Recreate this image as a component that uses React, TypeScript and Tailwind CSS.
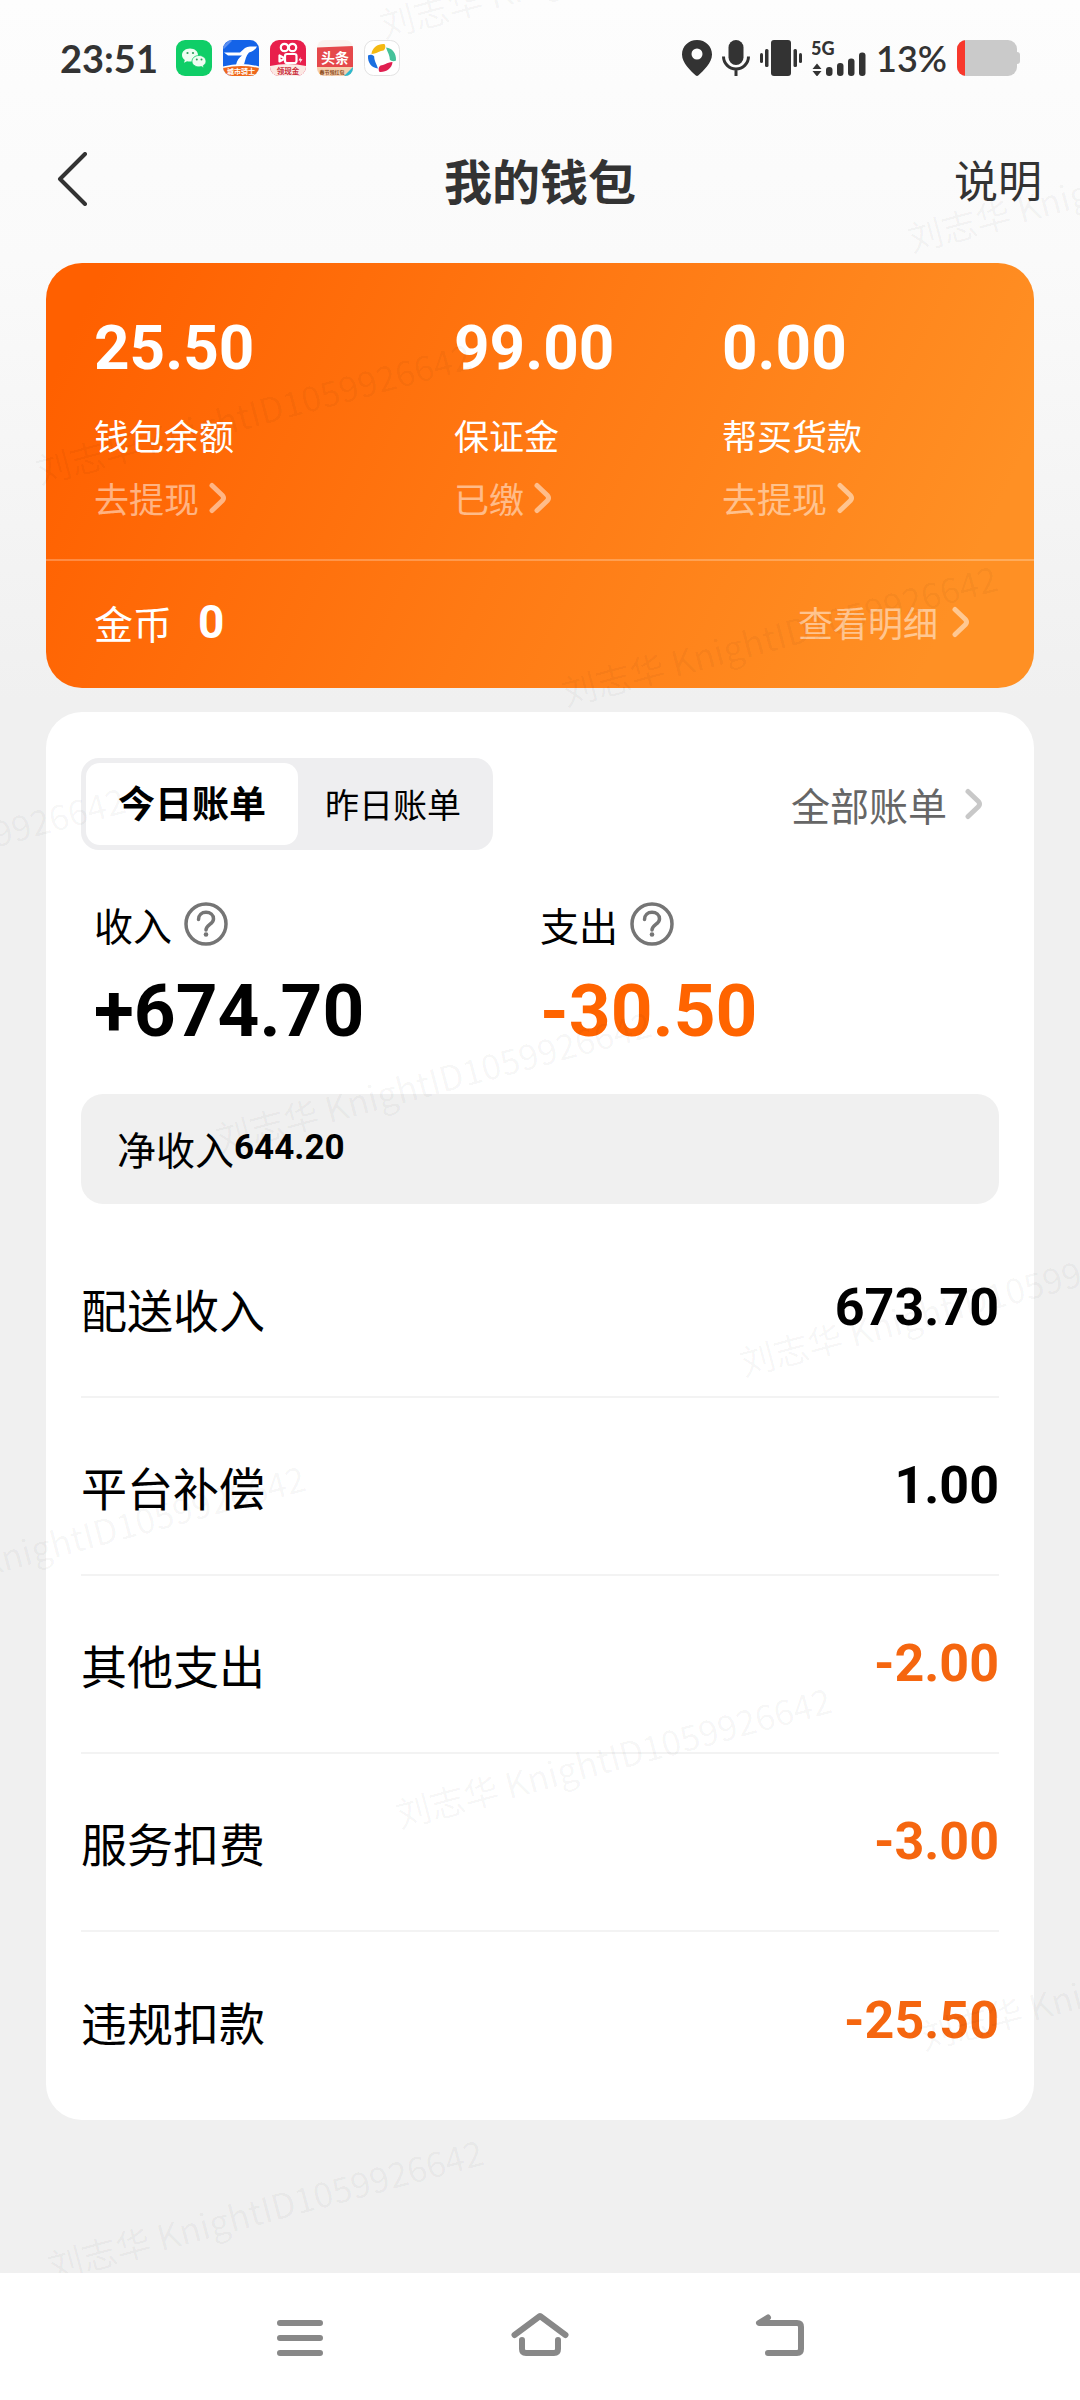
import { useState } from 'react'
import clsx from 'clsx'

const BALANCES = [
  { amount: '25.50', label: '钱包余额', action: '去提现' },
  { amount: '99.00', label: '保证金', action: '已缴' },
  { amount: '0.00', label: '帮买货款', action: '去提现' },
]

const TABS = ['今日账单', '昨日账单']

const BILLS = [
  { label: '配送收入', amount: '673.70' },
  { label: '平台补偿', amount: '1.00' },
  { label: '其他支出', amount: '-2.00' },
  { label: '服务扣费', amount: '-3.00' },
  { label: '违规扣款', amount: '-25.50' },
]

const WATERMARKS = [
  'left-[380px] top-[4px]',
  'left-[908px] top-[218px]',
  'left-[36px] top-[450px]',
  'left-[562px] top-[672px]',
  'left-[-310px] top-[894px]',
  'left-[216px] top-[1118px]',
  'left-[740px] top-[1342px]',
  'left-[-130px] top-[1572px]',
  'left-[396px] top-[1794px]',
  'left-[920px] top-[2016px]',
  'left-[48px] top-[2246px]',
]

function Chevron({ className }: { className?: string }) {
  return (
    <svg viewBox="0 0 18 32" className={clsx('h-8 w-[18px]', className)} fill="none" aria-hidden>
      <path
        d="M3 3.500 13.500 13.500Q15.500 16 13.500 18.500L3 28.500"
        stroke="currentColor"
        strokeWidth="5"
        strokeLinecap="round"
        strokeLinejoin="round"
      />
    </svg>
  )
}

function AppIcons() {
  return (
    <div className="flex gap-[11px]">
      <svg viewBox="0 0 36 36" className="size-9" aria-hidden>
        <rect width="36" height="36" rx="9" fill="#0fce67" />
        <path d="M14 8.500c-4.700 0-8 2.900-8 6.500 0 2 1 3.800 2.800 5l-.8 2.700 3-1.500c1 .3 2 .4 3 .4 4.700 0 8-3 8-6.600s-3.300-6.500-8-6.500z" fill="#effdf2" />
        <path d="M23 15.500c-4 0-7 2.500-7 5.700s3 5.700 7 5.700c.8 0 1.700-.1 2.400-.3l2.600 1.300-.7-2.400c1.700-1 2.700-2.600 2.700-4.300 0-3.200-3-5.700-7-5.700z" fill="#effdf2" stroke="#0fce67" strokeWidth=".8" />
        <g fill="#2f9e5c">
          <circle cx="11.500" cy="13" r="1.100" />
          <circle cx="17" cy="13" r="1.100" />
          <circle cx="20.800" cy="19.500" r="1" />
          <circle cx="25.500" cy="19.500" r="1" />
        </g>
      </svg>
      <svg viewBox="0 0 36 36" className="size-9" aria-hidden>
        <clipPath id="knight">
          <rect width="36" height="36" rx="9" />
        </clipPath>
        <g clipPath="url(#knight)">
          <rect width="36" height="36" fill="#1463e8" />
          <path d="M0 26.500Q18 21.500 36 26.500V36H0z" fill="#fff" />
          <path d="M0 28Q18 24 36 28V36H0z" fill="#f0681a" />
          <path d="M1 12.500h16l5-4.500Q24 6.500 27 6.500h7c-2 3.500-4 5-8 6-3 3-3.500 7-5 12l-8 .5c1-5 3-7.500 6-9.500H5z" fill="#fff" />
          <path d="M0 8 8 0" stroke="#5c8ff0" strokeWidth="2.500" />
        </g>
        <text x="18" y="34" textAnchor="middle" fontSize="7" fontWeight="700" fill="#fff">
          城市骑士
        </text>
      </svg>
      <svg viewBox="0 0 36 36" className="size-9" aria-hidden>
        <clipPath id="kuai">
          <rect width="36" height="36" rx="9" />
        </clipPath>
        <g clipPath="url(#kuai)">
          <rect width="36" height="36" fill="#e81f4c" />
          <path d="M0 26Q18 22 36 26V36H0z" fill="#fbe9e4" />
        </g>
        <g fill="none" stroke="#fff" strokeWidth="2.200" strokeLinejoin="round">
          <circle cx="14.500" cy="7.500" r="3.700" />
          <circle cx="22.500" cy="7.500" r="3.700" />
          <rect x="15" y="14" width="11.500" height="9" rx="2" />
          <path d="m15 18.500-5.500-3v6z" />
        </g>
        <path d="m30.500 17-2 3.500h2l-.8 2.800 2.800-4h-2z" fill="#fff" />
        <text x="18" y="34" textAnchor="middle" fontSize="7.500" fontWeight="700" fill="#c92c3a">
          领现金
        </text>
      </svg>
      <svg viewBox="0 0 36 36" className="size-9" aria-hidden>
        <clipPath id="news">
          <rect width="36" height="36" rx="8" />
        </clipPath>
        <g clipPath="url(#news)">
          <rect width="36" height="36" fill="#fbf3ef" />
          <path d="M0 7.500 36 6v21H0z" fill="#e5484b" />
          <path d="M0 27h36v9H0z" fill="#f6cfae" />
          <path d="m27 36 9-9v9z" fill="#2cb9cf" />
        </g>
        <text x="18" y="23" textAnchor="middle" fontSize="14" fontWeight="700" fill="#fff">
          头条
        </text>
        <text x="15" y="34" textAnchor="middle" fontSize="5" fontWeight="700" fill="#8a4a20">
          春节领红包
        </text>
      </svg>
      <svg viewBox="0 0 36 36" className="size-9" aria-hidden>
        <rect x=".5" y=".5" width="35" height="35" rx="9" fill="#fff" stroke="#e3e3e3" />
        <path d="M7.500 14C8 7.500 14 3.500 20.500 4c1.500 2 1 5-1 6.500-3.500 0-6 3-12 3.500z" fill="#f4b912" />
        <path d="M22 7.500c6 .5 10.500 5.500 10 13-2 1.300-5 .8-6.200-1C25.800 15.500 24 13 22 7.500z" fill="#45c29a" />
        <path d="M28.500 22c-.5 6.500-6.500 10.500-13 10-1.500-2-1-5 1-6.500 3.500 0 6-3 12-3.500z" fill="#e01f50" />
        <path d="M14 28.500c-6-.5-10.500-5.500-10-13 2-1.300 5-.8 6.200 1 0 4 1.800 6.500 3.800 12z" fill="#1c6fe0" />
      </svg>
    </div>
  )
}

function StatusBar() {
  return (
    <div className="flex h-[116px] items-center justify-between px-[60px] text-[#333]">
      <div className="flex items-center gap-[18px]">
        <span className="font-[Lato,sans-serif] text-[38px] font-bold leading-none">23:51</span>
        <AppIcons />
      </div>
      <div className="flex items-center gap-[10px]">
        <svg viewBox="0 0 30 36" className="h-9 w-[30px]" fill="currentColor" aria-hidden>
          <path
            fillRule="evenodd"
            d="M15 0C6.500 0 0 6.300 0 14.500 0 23 9 31 13.500 35.300q1.500 1.200 3 0C21 31 30 23 30 14.500 30 6.300 23.500 0 15 0zm0 8.500a5.500 5.500 0 1 0 0 11 5.500 5.500 0 0 0 0-11z"
          />
        </svg>
        <svg viewBox="0 0 28 36" className="h-9 w-7" fill="none" aria-hidden>
          <rect x="6.500" width="15" height="25" rx="7.500" fill="currentColor" />
          <path d="M1.500 16.500a12.500 12.500 0 0 0 25 0M14 29.500V36" stroke="currentColor" strokeWidth="3" />
        </svg>
        <svg viewBox="0 0 42 36" className="h-9 w-[42px]" fill="currentColor" aria-hidden>
          <rect x="11" width="20" height="36" rx="3" />
          <rect x="5" y="9" width="3.500" height="18" rx="1.500" />
          <rect x="33.500" y="9" width="3.500" height="18" rx="1.500" />
          <rect y="13" width="3" height="10" rx="1.500" />
          <rect x="39" y="13" width="3" height="10" rx="1.500" />
        </svg>
        <svg viewBox="0 0 54 36" className="h-9 w-[54px]" fill="currentColor" aria-hidden>
          <text x="-1" y="14.500" fontSize="18" fontWeight="900" fontFamily="Lato, sans-serif">
            5G
          </text>
          <path d="m5 23.500 4.500 5.500H.5zM.5 31h9L5 36.500z" />
          <rect x="14" y="27" width="6.500" height="9" rx="3" />
          <rect x="25" y="23" width="6.500" height="13" rx="3" />
          <rect x="36" y="18.500" width="6.500" height="17.500" rx="3" />
          <rect x="47" y="12.500" width="6.500" height="23.500" rx="3" />
        </svg>
        <span className="font-[Lato,sans-serif] text-[36px] font-semibold leading-none">13%</span>
        <svg viewBox="0 0 63 36" className="h-9 w-[63px]" aria-hidden>
          <clipPath id="battery">
            <rect width="60" height="36" rx="9" />
          </clipPath>
          <rect x="56" y="12" width="7" height="12" rx="3" fill="#cacaca" />
          <g clipPath="url(#battery)">
            <rect width="60" height="36" fill="#cacaca" />
            <rect width="8" height="36" fill="#f8382c" />
          </g>
        </svg>
      </div>
    </div>
  )
}

function Header() {
  return (
    <header className="grid h-[130px] grid-cols-3 items-center px-[38px] pb-1 text-[#333]">
      <button type="button" aria-label="返回" className="justify-self-start px-[18px]">
        <svg viewBox="0 0 32 54" className="h-[54px] w-8" fill="none" aria-hidden>
          <path d="M29 2 4 27 29 52" stroke="currentColor" strokeWidth="4" strokeLinecap="round" strokeLinejoin="round" />
        </svg>
      </button>
      <h1 className="text-center text-[48px] font-bold leading-[64px]">我的钱包</h1>
      <a href="#help" className="justify-self-end text-[44px] leading-[64px]">
        说明
      </a>
    </header>
  )
}

function WalletCard() {
  return (
    <section className="rounded-[36px] bg-[linear-gradient(115deg,#ff6000_5%,#ff7a14_50%,#ff9024_90%)] text-white">
      <div className="grid grid-cols-[360fr_268fr_264fr] px-12 pb-[41px] pt-[53px]">
        {BALANCES.map((item) => (
          <div key={item.label}>
            <p className="font-[Roboto,sans-serif] text-[62px] font-bold leading-[64px]">{item.amount}</p>
            <p className="mt-[35px] text-[35px] leading-10">{item.label}</p>
            <a href="#detail" className="mt-[23px] flex items-center gap-[10px] text-[35px] leading-10 text-white/50">
              {item.action}
              <Chevron />
            </a>
          </div>
        ))}
      </div>
      <div className="flex h-[129px] items-center justify-between border-t-2 border-white/25 pb-[6px] pl-12 pr-16">
        <p className="flex items-center gap-[26px] text-[39px] leading-[48px]">
          金币
          <span className="font-[Roboto,sans-serif] text-[46px] font-bold">0</span>
        </p>
        <a href="#coins" className="flex items-center gap-[14px] text-[35px] leading-10 text-white/50">
          查看明细
          <Chevron />
        </a>
      </div>
    </section>
  )
}

function Total({ label, amount, className }: { label: string; amount: string; className?: string }) {
  return (
    <div>
      <div className="flex items-center gap-3 text-[39px] leading-[48px]">
        {label}
        <button type="button" aria-label={`${label}说明`}>
          <svg viewBox="0 0 44 44" className="size-11" fill="none" stroke="#757575" aria-hidden>
            <circle cx="22" cy="22" r="20" strokeWidth="3.500" />
            <path
              d="M14.500 17.500c0-4.500 3.300-7.300 7.500-7.300s7.500 2.700 7.500 6.700c0 5.300-7.500 5.600-7.500 11.100"
              strokeWidth="3.500"
              strokeLinecap="round"
            />
            <circle cx="22" cy="32.500" r="2.300" fill="#757575" stroke="none" />
          </svg>
        </button>
      </div>
      <p className={clsx('mt-[23px] font-[Roboto,sans-serif] text-[73px] font-bold leading-[80px]', className)}>
        {amount}
      </p>
    </div>
  )
}

function BillCard() {
  const [activeTab, setActiveTab] = useState(0)

  return (
    <section className="rounded-[36px] bg-white px-[35px] pb-[10px] pt-[46px] text-black">
      <div className="flex items-center justify-between pr-4">
        <div className="flex rounded-[18px] bg-[#eeeef0] p-[5px]">
          {TABS.map((tab, i) => (
            <button
              key={tab}
              type="button"
              onClick={() => setActiveTab(i)}
              className={clsx(
                'h-[82px] rounded-[14px] pb-[2px]',
                i === activeTab ? 'bg-white px-8 text-[37px] font-bold' : 'px-[27px] text-[34px]',
              )}
            >
              {tab}
            </button>
          ))}
        </div>
        <a href="#all" className="flex items-center gap-[18px] text-[39px] leading-[48px] text-[#666]">
          全部账单
          <Chevron className="text-[#c8c8c8]" />
        </a>
      </div>

      <div className="mt-[50px] grid grid-cols-2 px-[13px]">
        <Total label="收入" amount="+674.70" />
        <Total label="支出" amount="-30.50" className="text-[#ff6400]" />
      </div>

      <p className="mt-[43px] flex h-[110px] items-center rounded-[22px] bg-[#f0f0f0] px-9 pb-[2px] text-[39px]">
        净收入<span className="font-[Roboto,sans-serif] text-[35px] font-bold">644.20</span>
      </p>

      <dl className="mt-4 divide-y-2 divide-[#f3f3f3]">
        {BILLS.map((bill) => (
          <div key={bill.label} className="flex h-[178px] items-center justify-between">
            <dt className="text-[46px]">{bill.label}</dt>
            <dd
              className={clsx(
                'font-[Roboto,sans-serif] text-[52px] font-bold',
                bill.amount.startsWith('-') && 'text-[#f5660f]',
              )}
            >
              {bill.amount}
            </dd>
          </div>
        ))}
      </dl>
    </section>
  )
}

function Watermarks() {
  return (
    <div className="pointer-events-none absolute inset-0 overflow-hidden" aria-hidden>
      {WATERMARKS.map((pos) => (
        <span
          key={pos}
          className={clsx('absolute origin-left -rotate-15 whitespace-nowrap text-[35px] leading-10 text-black/4', pos)}
        >
          刘志华 KnightID1059926642
        </span>
      ))}
    </div>
  )
}

function NavBar() {
  return (
    <nav className="flex h-[127px] items-center justify-center gap-[180px] bg-white pb-1 text-[#888]">
      <button type="button" aria-label="最近任务">
        <svg viewBox="0 0 60 48" className="h-12 w-[60px]" fill="none" stroke="currentColor" strokeWidth="6" strokeLinecap="round" aria-hidden>
          <path d="M10 12h40M10 27h40M10 42h40" />
        </svg>
      </button>
      <button type="button" aria-label="主页">
        <svg
          viewBox="0 0 60 48"
          className="h-12 w-[60px]"
          fill="none"
          stroke="currentColor"
          strokeWidth="6"
          strokeLinecap="round"
          strokeLinejoin="round"
          aria-hidden
        >
          <path d="M4.500 24 30 5l25.500 19" />
          <path d="M12 29v9q0 4 4 4h28q4 0 4-4v-9" />
        </svg>
      </button>
      <button type="button" aria-label="返回上一页">
        <svg
          viewBox="0 0 60 48"
          className="h-12 w-[60px]"
          fill="none"
          stroke="currentColor"
          strokeWidth="6"
          strokeLinecap="round"
          strokeLinejoin="round"
          aria-hidden
        >
          <path d="M18 6.500 9 12h38q4 0 4 4v22q0 4-4 4H18" />
        </svg>
      </button>
    </nav>
  )
}

export default function App() {
  return (
    <div className="flex min-h-screen flex-col bg-[#f0f0f0] font-['Noto_Sans_CJK_SC',sans-serif]">
      <div className="relative flex-1 bg-[linear-gradient(180deg,#fdfdfd_0,#fafafa_260px,#f0f0f0_700px)]">
        <StatusBar />
        <Header />
        <main className="flex flex-col gap-6 px-[46px] pb-10 pt-[17px]">
          <WalletCard />
          <BillCard />
        </main>
        <Watermarks />
      </div>
      <NavBar />
    </div>
  )
}
